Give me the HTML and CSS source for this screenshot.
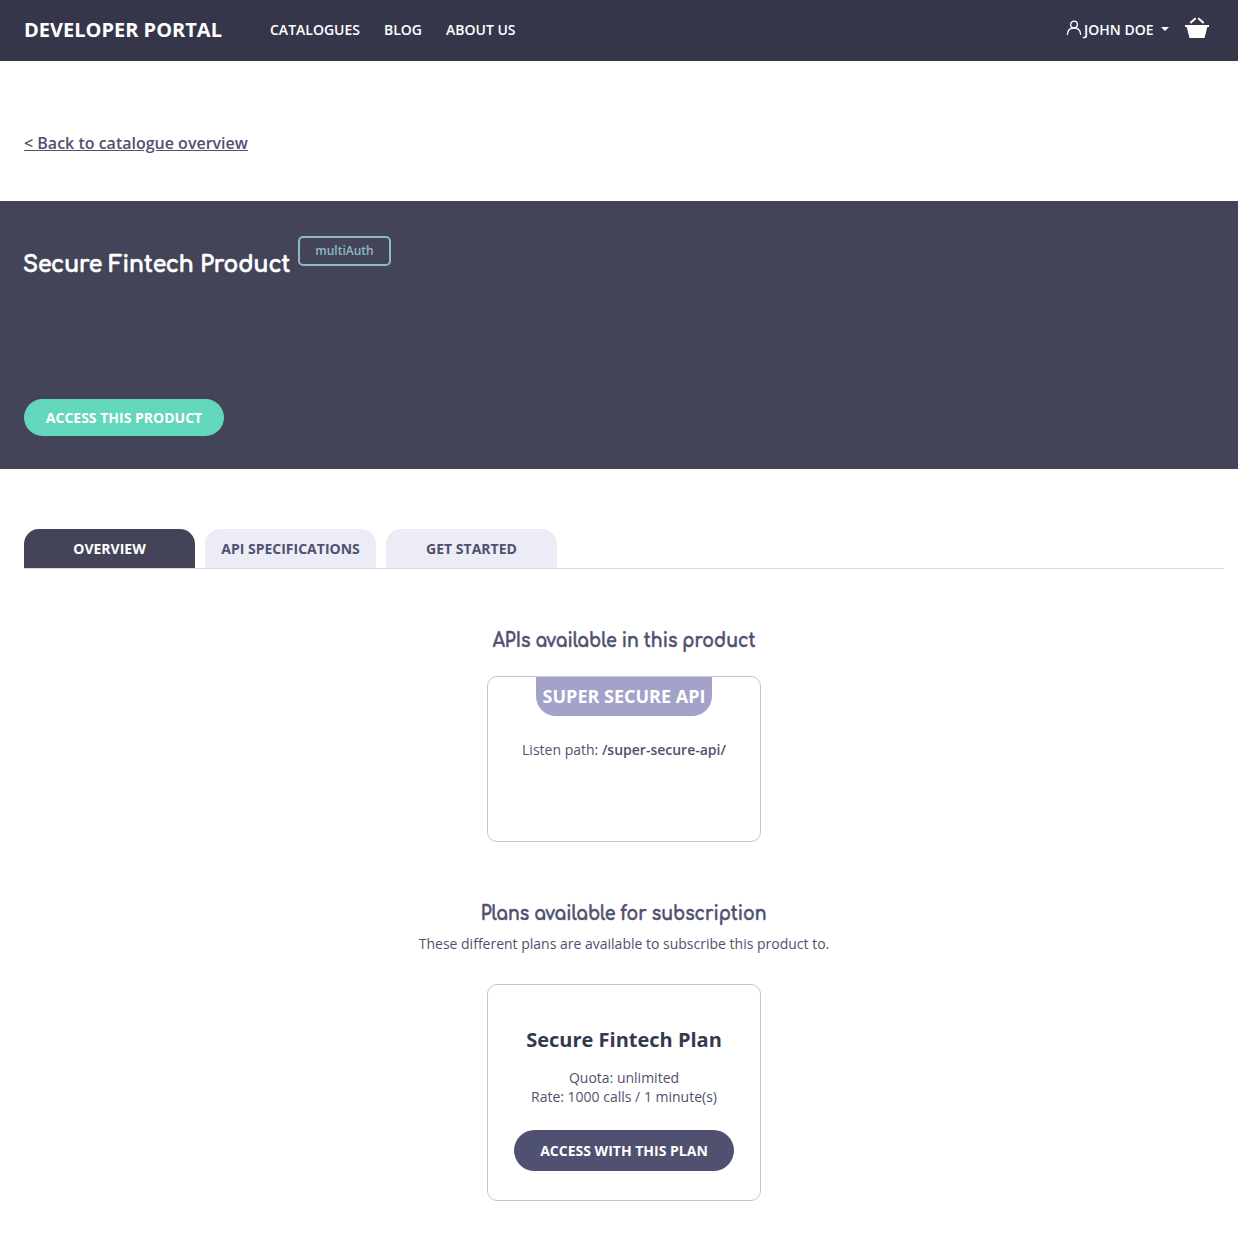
FILE: index.html
```html
<!DOCTYPE html>
<html lang="en">
<head>
<meta charset="utf-8">
<title>Developer Portal</title>
<link rel="stylesheet" href="styles.css">
</head>
<body>
<header class="topbar">
  <a class="brand">DEVELOPER PORTAL</a>
  <nav class="nav"><a>CATALOGUES</a><a>BLOG</a><a>ABOUT US</a></nav>
  <div class="account">
    <svg class="user-icon" width="16" height="16" viewBox="0 0 16 16" fill="none" stroke="#fff" stroke-width="1.3" stroke-linecap="round"><circle cx="8" cy="4.6" r="3.4"/><path d="M1.400 14.400C1.600 10.600 4 8 8 8s6.400 2.600 6.600 6.400"/></svg>
    <span class="user-name">JOHN DOE</span>
    <span class="caret"></span>
    <svg class="basket" width="26" height="22" viewBox="0 0 26 22"><path d="M1 8h24v2h-1.700L20.500 21h-15L2.700 10H1z" fill="#fff"/><path d="M6.300 6L11.700 1.200M19.700 6L14.300 1.200" stroke="#fff" stroke-width="2"/></svg>
  </div>
</header>
<div class="back"><a class="back-link">&lt; Back to catalogue overview</a></div>
<section class="hero">
  <div class="hero-title"><h1>Secure Fintech Product</h1><span class="badge">multiAuth</span></div>
  <a class="btn btn-access">ACCESS THIS PRODUCT</a>
</section>
<main class="content">
  <div class="tabs">
    <a class="tab active">OVERVIEW</a><a class="tab">API SPECIFICATIONS</a><a class="tab">GET STARTED</a>
  </div>
  <section class="apis">
    <h2>APIs available in this product</h2>
    <article class="card api-card">
      <h3 class="api-name">SUPER SECURE API</h3>
      <p class="path">Listen path: <b>/super-secure-api/</b></p>
    </article>
  </section>
  <section class="plans">
    <h2>Plans available for subscription</h2>
    <p class="intro">These different plans are available to subscribe this product to.</p>
    <article class="card plan-card">
      <h3 class="plan-name">Secure Fintech Plan</h3>
      <p class="limits">Quota: unlimited<br>Rate: 1000 calls / 1 minute(s)</p>
      <a class="btn btn-plan">ACCESS WITH THIS PLAN</a>
    </article>
  </section>
</main>
</body>
</html>
```
FILE: styles.css
```css
* { box-sizing: border-box; margin: 0; padding: 0; }
body { background: #fff; color: #505170; font: 14px/19px "Open Sans", sans-serif; white-space: nowrap; }
.topbar { height: 61px; background: #36364a; color: #fff; display: flex; align-items: center; padding: 0 28px 2px 24px; font-weight: 600; }
.brand { font-size: 20px; font-weight: 700; line-height: 28px; width: 246px; }
.nav { display: flex; gap: 24px; }
.account { display: flex; align-items: center; margin-left: auto; }
.user-icon { margin: -4px 2px 0 0; }
.caret { border: 4px solid transparent; border-top-color: #fff; border-bottom: 0; margin: -2px 15px 0 7.500px; }
.basket { margin-top: -4px; }
.back { height: 140px; padding: 71px 24px 0; }
.back-link { font-size: 16px; line-height: 22px; font-weight: 600; text-decoration: underline; text-underline-offset: 1px; }
.hero { height: 268px; background: #444459; color: #fff; padding: 35px 24px 33px; display: flex; flex-direction: column; justify-content: space-between; align-items: flex-start; }
.hero-title { display: flex; align-items: flex-start; }
h1, h2 { font-family: Comfortaa, Lato, sans-serif; font-weight: 700; -webkit-text-stroke: 0.7px currentColor; }
h1 { font-size: 24px; line-height: 30px; width: 275px; margin-left: -1px; padding-top: 14px; transform: scaleX(0.909); transform-origin: left; }
.badge { width: 93px; height: 30px; border: 2px solid #8bbbc5; border-radius: 5px; color: #8bbbc5; font-size: 12px; line-height: 26px; font-weight: 600; text-align: center; }
.btn { display: block; color: #fff; font-weight: 700; text-align: center; }
.btn-access { width: 200px; height: 37px; line-height: 37px; border-radius: 19px; background: #63d7bc; }
.content { width: 1200px; margin-left: 24px; padding-top: 60px; }
.tabs { display: flex; gap: 10px; height: 40px; border-bottom: 1px solid #dcdce0; }
.tab { width: 171px; height: 39px; line-height: 39px; border-radius: 15px 15px 0 0; background: #ececf6; font-weight: 700; text-align: center; }
.tab.active { background: #444459; color: #fff; }
.apis, .plans { display: flex; flex-direction: column; align-items: center; }
.apis { padding-top: 59px; }
.plans { padding-top: 59px; }
h2 { font-size: 19px; line-height: 26px; transform: scaleX(0.912); -webkit-text-stroke-width: 0.5px; }
.card { width: 274px; border: 1px solid #c4c3e0; border-radius: 10px; display: flex; flex-direction: column; align-items: center; }
.api-card { height: 166px; margin-top: 22px; }
.api-name { width: 176px; height: 39px; line-height: 39px; border-radius: 0 0 20px 20px; background: #a3a2c8; color: #fff; font-size: 18px; text-align: center; }
.path { margin-top: 24px; }
.path b { font-weight: 600; }
.intro { margin-top: 7px; }
.plan-card { height: 217px; margin-top: 31px; padding-top: 41px; text-align: center; }
.plan-name { color: #333a4d; font-size: 20px; line-height: 27px; }
.limits { margin-top: 15px; }
.btn-plan { width: 220px; height: 41px; line-height: 41px; border-radius: 21px; background: #505170; margin-top: 24px; }
```
